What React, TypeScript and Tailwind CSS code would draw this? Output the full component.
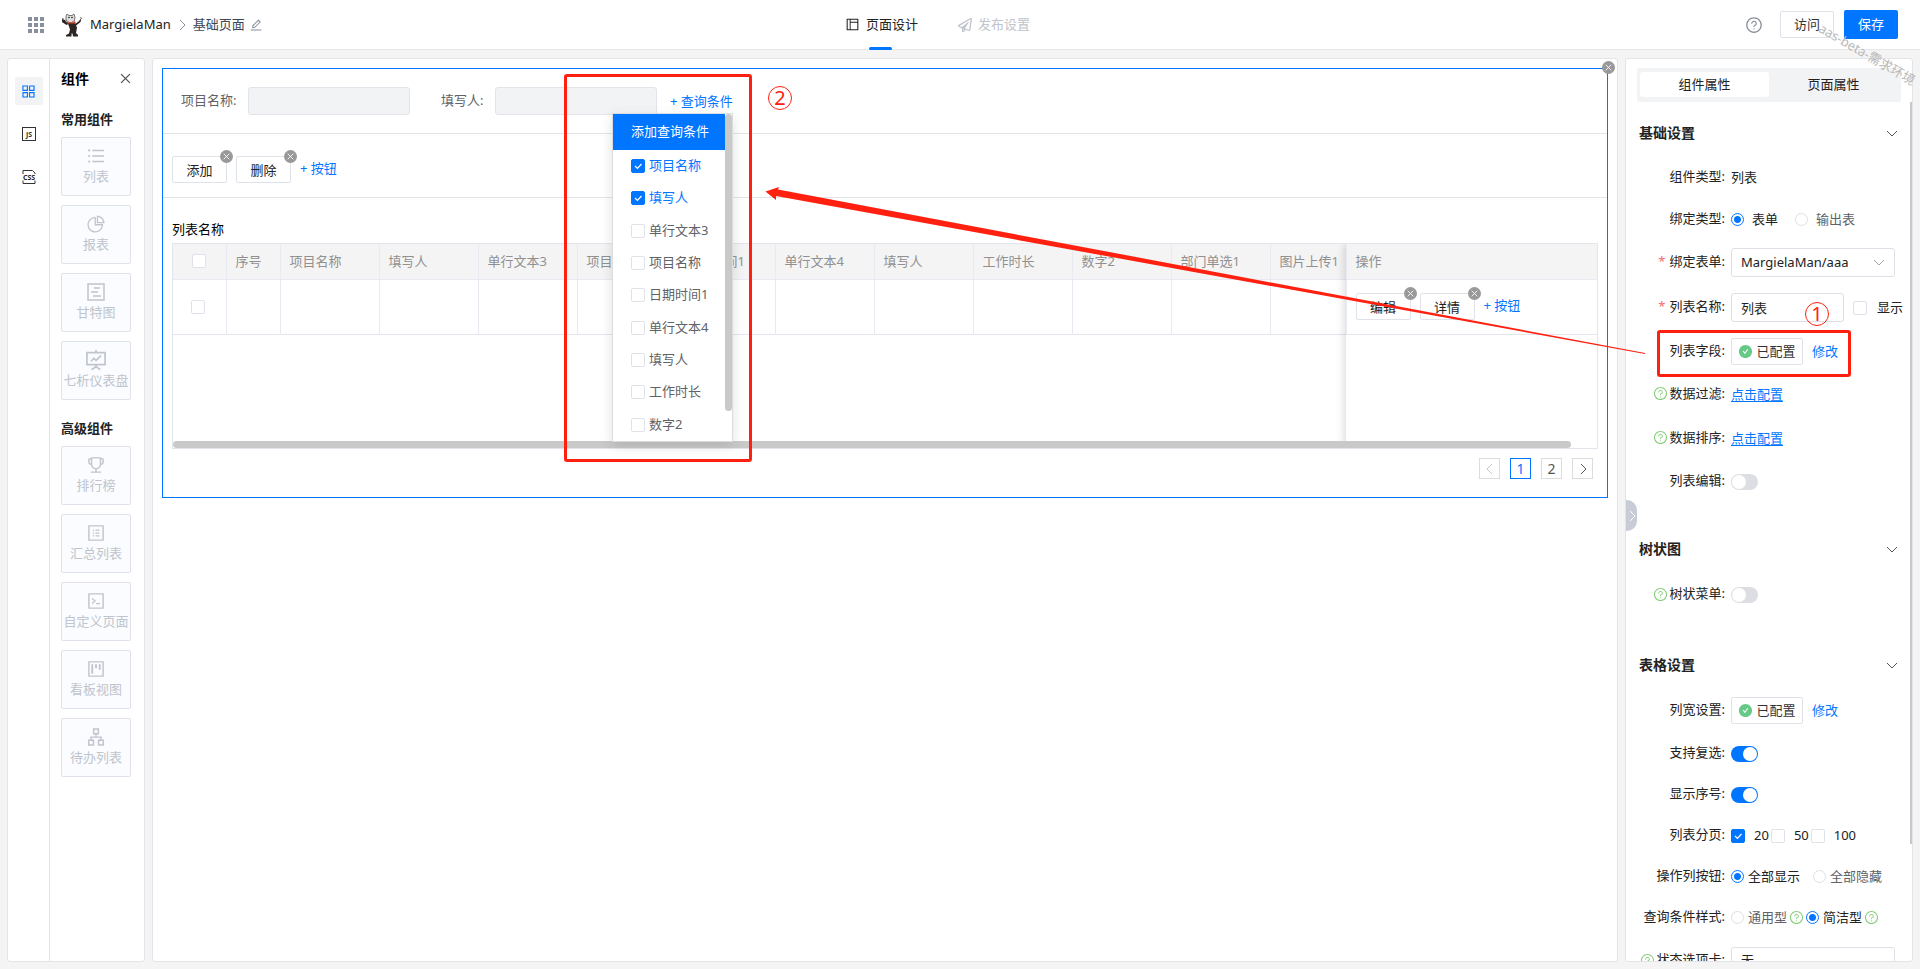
import type { ReactNode } from 'react';
import {
    AiFillCheckCircle,
    AiOutlineApartment,
    AiOutlineAppstore,
    AiOutlineCode,
    AiOutlineEdit,
    AiOutlineFundProjectionScreen,
    AiOutlineLayout,
    AiOutlinePieChart,
    AiOutlineProfile,
    AiOutlineProject,
    AiOutlineQuestionCircle,
    AiOutlineTrophy,
    AiOutlineUnorderedList,
} from 'react-icons/ai';
import { FaRegPaperPlane } from 'react-icons/fa';

type ChevronProps = { dir: 'down' | 'left' | 'right'; className?: string };

const chevronPoints = {
    down: '1,4 6,9 11,4',
    left: '8,1 3,6 8,11',
    right: '4,1 9,6 4,11',
};

function Chevron({ dir, className = '' }: ChevronProps) {
    return (
        <svg viewBox="0 0 12 12" className={`size-3 shrink-0 ${className}`} fill="none" stroke="currentColor">
            <polyline points={chevronPoints[dir]} />
        </svg>
    );
}

function Cross({ className = '' }: { className?: string }) {
    return (
        <svg viewBox="0 0 10 10" className={className} fill="none" stroke="currentColor" strokeWidth="1.2">
            <path d="M1 1l8 8M9 1l-8 8" />
        </svg>
    );
}

function GanttIcon({ className = '' }: { className?: string }) {
    return (
        <svg viewBox="0 0 18 18" className={className} fill="none" stroke="currentColor" strokeWidth="1.5">
            <rect x="1" y="1" width="16" height="16" />
            <path d="M7 5h6M4 9h7M6 13h8" />
        </svg>
    );
}

function Checkbox({ label, checked = false }: { label: string; checked?: boolean }) {
    return (
        <span className="relative inline-flex size-3.5 shrink-0">
            <input
                type="checkbox"
                aria-label={label}
                defaultChecked={checked}
                className="peer size-3.5 appearance-none rounded-[2px] border border-[#dfe2ea] bg-white checked:border-[#0075ff] checked:bg-[#0075ff]"
            />
            <svg
                viewBox="0 0 14 14"
                className="pointer-events-none absolute inset-0 hidden text-white peer-checked:block"
                fill="none"
                stroke="currentColor"
                strokeWidth="1.2"
            >
                <path d="M4 7l2.4 2.4L10.5 5" />
            </svg>
        </span>
    );
}

function Radio({ name, label, checked = false }: { name: string; label: string; checked?: boolean }) {
    return (
        <input
            type="radio"
            name={name}
            aria-label={label}
            defaultChecked={checked}
            className="size-[13px] shrink-0 appearance-none rounded-full border border-[#dcdfe6] bg-white checked:border-[#0075ff] checked:bg-[radial-gradient(#0075ff_3px,#fff_4px)]"
        />
    );
}

function Switch({ label, checked = false }: { label: string; checked?: boolean }) {
    return (
        <input
            type="checkbox"
            role="switch"
            aria-label={label}
            defaultChecked={checked}
            className="h-4 w-[27px] shrink-0 appearance-none rounded-full bg-[#dcdee3] p-px before:block before:size-3.5 before:rounded-full before:bg-white checked:bg-[#0075ff] checked:before:ml-[11px]"
        />
    );
}

function RemoveBadge({ label, className }: { label: string; className: string }) {
    return (
        <button
            aria-label={label}
            className={`absolute flex size-[13px] items-center justify-center rounded-full bg-[#999] text-white ${className}`}
        >
            <Cross className="size-[7px]" />
        </button>
    );
}

function ActionButton({ children }: { children: string }) {
    return (
        <div className="relative">
            <button className="h-[27px] w-[55px] rounded-[2px] border border-[#dfe2e8] bg-white pt-0.5 text-[#222]">
                {children}
            </button>
            <RemoveBadge label={`移除${children}`} className="-top-1.5 -right-1.5" />
        </div>
    );
}

function AddLink({ children }: { children: string }) {
    return <button className="pb-0.5 whitespace-nowrap text-[#0075ff]">+ {children}</button>;
}

const commonComponents = [
    { name: '列表', icon: AiOutlineUnorderedList, size: 'size-5' },
    { name: '报表', icon: AiOutlinePieChart, size: 'size-5' },
    { name: '甘特图', icon: GanttIcon, size: 'size-[18px]' },
    { name: '七析仪表盘', icon: AiOutlineFundProjectionScreen, size: 'size-6' },
];

const advancedComponents = [
    { name: '排行榜', icon: AiOutlineTrophy, size: 'size-5' },
    { name: '汇总列表', icon: AiOutlineProfile, size: 'size-5' },
    { name: '自定义页面', icon: AiOutlineCode, size: 'size-5' },
    { name: '看板视图', icon: AiOutlineProject, size: 'size-5' },
    { name: '待办列表', icon: AiOutlineApartment, size: 'size-5' },
];

function ComponentGroup({ title, items }: { title: string; items: typeof commonComponents }) {
    return (
        <section>
            <h3 className="h-[34px] pt-1.5 leading-5 font-bold text-[#222]">{title}</h3>
            <div className="flex flex-col gap-[9px]">
                {items.map(({ name, icon: Icon, size }) => (
                    <button
                        key={name}
                        className="flex h-[59px] flex-col items-center rounded-[2px] border border-[#dfe2ea] bg-[#fafcff] pt-1.5 text-[#c0c4cc]"
                    >
                        <span className="flex h-6 items-center">
                            <Icon className={size} />
                        </span>
                        <span className="leading-4 whitespace-nowrap">{name}</span>
                    </button>
                ))}
            </div>
        </section>
    );
}

function CatLogo() {
    return (
        <svg viewBox="0 0 22 24" className="h-6 w-[22px]">
            <path
                d="M5 3l1-2 2 1.5h3L13 1l1 3-.5 3.500-3 2H8L5 7z"
                fill="#ddd"
                stroke="#555"
                strokeWidth="0.8"
            />
            <circle cx="8" cy="4.500" r="0.8" fill="#222" />
            <circle cx="11" cy="4.500" r="0.8" fill="#222" />
            <path d="M5 8.500q5 2.500 9-.5l1 2.500q-5 2-9 .5z" fill="#d8402c" />
            <path d="M1 6l3 1 3 4-1.500 1L1 9zM20.500 5l-1 4-5 4-1-1.500 4-3z" fill="#2b2523" />
            <path d="M7 10.500h7l2 4-1 5.500 2 2v1.500h-5l-.5-3-1 0v3H5V22l3-1.500 1-4z" fill="#2b2523" />
            <path d="M1 5.500l2 .5M19 4.500l2 1" stroke="#777" />
        </svg>
    );
}

function TopBar() {
    return (
        <header className="grid h-[50px] shrink-0 grid-cols-[1fr_auto_1fr] border-b border-[#e6e6e6] bg-white">
            <div className="flex items-center pl-7">
                <button aria-label="应用" className="mr-[17px] grid grid-cols-3 gap-0.5">
                    {Array.from({ length: 9 }, (_, i) => (
                        <span key={i} className="size-1 bg-[#87909c]" />
                    ))}
                </button>
                <CatLogo />
                <a href="#app" className="ml-[7px] text-[#222]">
                    MargielaMan
                </a>
                <Chevron dir="right" className="mx-[5px] text-[#87909c]" />
                <a href="#page" className="text-[#404652]">
                    基础页面
                </a>
                <button aria-label="编辑名称" className="ml-1 text-[#87909c]">
                    <AiOutlineEdit className="size-3.5" />
                </button>
            </div>
            <nav className="flex pr-[45px]">
                <a href="#design" className="relative flex items-center gap-1.5 text-[#222]">
                    <AiOutlineLayout className="size-[15px]" />
                    页面设计
                    <span className="absolute -bottom-px left-6 h-[3px] w-[23px] rounded-full bg-[#0075ff]" />
                </a>
                <a href="#publish" className="ml-10 flex items-center gap-1.5 text-[#c0c4cc]">
                    <FaRegPaperPlane className="size-3.5" />
                    发布设置
                </a>
            </nav>
            <div className="flex items-center justify-end pr-[22px]">
                <button aria-label="帮助" className="text-[#87909c]">
                    <AiOutlineQuestionCircle className="size-[18px]" />
                </button>
                <button className="ml-[17px] h-[27px] w-[54px] rounded-[2px] border border-[#dfe2e8] text-[#333]">访问</button>
                <button className="ml-2.5 h-[29px] w-[54px] rounded-[2px] bg-[#0075ff] text-white">保存</button>
            </div>
        </header>
    );
}

function Sidebar() {
    return (
        <aside className="flex w-[138px] shrink-0 rounded-[3px] border border-[#e2e4e8] bg-white">
            <nav className="flex w-[41px] flex-col items-center gap-[15px] pt-[18px]">
                <button aria-label="组件" className="flex size-7 items-center justify-center rounded-[2px] bg-[#f2f3f5] text-[#0075ff]">
                    <AiOutlineAppstore className="size-[17px]" />
                </button>
                <button aria-label="JS" className="flex size-7 items-center justify-center">
                    <svg viewBox="0 0 14 14" className="size-3.5">
                        <rect x="0.5" y="0.5" width="13" height="13" fill="none" stroke="#333" />
                        <text x="7" y="9.500" textAnchor="middle" fontSize="7" fontWeight="700" fill="#333">
                            JS
                        </text>
                    </svg>
                </button>
                <button aria-label="CSS" className="flex size-7 items-center justify-center">
                    <svg viewBox="0 0 14 14" className="size-3.5 overflow-visible">
                        <path d="M1 4V.5h9.500l2.500 2.500v1M1 10.500v3h12v-3" fill="none" stroke="#333" />
                        <text x="7" y="9.500" textAnchor="middle" fontSize="7" fontWeight="700" fill="#222">
                            CSS
                        </text>
                    </svg>
                </button>
            </nav>
            <div className="flex-1 border-l border-[#e2e4e8] pr-[13px] pl-[11px]">
                <div className="mb-[5px] flex h-[39px] items-center justify-between">
                    <h2 className="text-sm font-bold text-black">组件</h2>
                    <button aria-label="关闭" className="text-[#555]">
                        <Cross className="size-[11px]" />
                    </button>
                </div>
                <ComponentGroup title="常用组件" items={commonComponents} />
                <div className="h-3" />
                <ComponentGroup title="高级组件" items={advancedComponents} />
            </div>
        </aside>
    );
}

const columns = [
    '项目名称',
    '填写人',
    '单行文本3',
    '项目名称',
    '日期时间1',
    '单行文本4',
    '填写人',
    '工作时长',
    '数字2',
    '部门单选1',
    '图片上传1',
];

const conditions = ['项目名称', '填写人', '单行文本3', '项目名称', '日期时间1', '单行文本4', '填写人', '工作时长', '数字2'];

function ConditionMenu() {
    return (
        <div className="absolute top-[26px] -left-[58px] z-10 flex h-[329px] w-[121px] border border-[#dcdcdc] bg-white shadow-[0_4px_12px_rgba(0,0,0,0.12)]">
            <div className="flex flex-1 flex-col">
                <div className="flex h-9 items-center bg-[#0075ff] pb-0.5 pl-[18px] text-white">添加查询条件</div>
                {conditions.map((name, i) => (
                    <label
                        key={i}
                        className={`flex flex-1 items-center gap-1 pl-[18px] ${i < 2 ? 'text-[#0075ff]' : 'text-[#606266]'}`}
                    >
                        <Checkbox label={name} checked={i < 2} />
                        <span className="pb-0.5">{name}</span>
                    </label>
                ))}
            </div>
            <div className="h-[297px] w-[7px] rounded-full bg-[#c9c9c9]" />
        </div>
    );
}

function DataTable() {
    return (
        <div className="relative h-[206px] overflow-hidden border border-[#e3e5ec]">
            <table className="w-full table-fixed border-collapse text-left text-[#909090]">
                <colgroup>
                    <col className="w-[53px]" />
                    <col className="w-[54px]" />
                    {columns.map((_, i) => (
                        <col key={i} className={i < 10 ? 'w-[99px]' : ''} />
                    ))}
                    <col className="w-[251px]" />
                </colgroup>
                <thead>
                    <tr className="h-[35px] border-b border-[#e8eaf2] bg-[#f4f4f4]">
                        <th className="border-r border-[#e8eaf2]">
                            <span className="flex justify-center">
                                <Checkbox label="全选" />
                            </span>
                        </th>
                        <th className="border-r border-[#e8eaf2] px-[9px] font-normal">序号</th>
                        {columns.map((name, i) => (
                            <th key={i} className="border-r border-[#e8eaf2] pl-[9px] font-normal whitespace-nowrap">
                                {name}
                            </th>
                        ))}
                        <th className="pl-[9px] font-normal">操作</th>
                    </tr>
                </thead>
                <tbody>
                    <tr className="h-[55px] border-b border-[#e3e5ec]">
                        <td className="border-r border-[#e8eaf2]">
                            <span className="flex pl-[18px]">
                                <Checkbox label="选择行" />
                            </span>
                        </td>
                        <td className="border-r border-[#e8eaf2]" />
                        {columns.map((_, i) => (
                            <td key={i} className="border-r border-[#e8eaf2]" />
                        ))}
                        <td className="pl-[9px]">
                            <div className="flex items-center gap-[9px]">
                                <ActionButton>编辑</ActionButton>
                                <ActionButton>详情</ActionButton>
                                <AddLink>按钮</AddLink>
                            </div>
                        </td>
                    </tr>
                </tbody>
            </table>
            {/* shadow of the pinned column */}
            <div className="pointer-events-none absolute inset-y-0 right-0 w-[251px] shadow-[-2px_0_8px_rgba(0,0,0,0.14)]" />
            <div className="absolute right-[26px] bottom-0 left-0 h-[7px] rounded-full bg-[#c9c9c9]" />
        </div>
    );
}

function Canvas() {
    const pageButton = 'flex size-[21px] items-center justify-center border text-sm';
    return (
        <main className="min-w-0 flex-1 rounded-[3px] border border-[#e2e4e8] bg-white p-[9px]">
            <div className="relative border border-[#0075ff]">
                <RemoveBadge label="移除列表" className="-top-2 -right-2" />
                <div className="flex h-[65px] items-center border-b border-[#e2e4e8] pl-[18px] text-[#606266]">
                    <label htmlFor="q-name" className="w-[67px]">
                        项目名称:
                    </label>
                    <input id="q-name" disabled className="h-7 w-[162px] rounded-[3px] border border-[#e2e4ea] bg-[#f2f3f5]" />
                    <label htmlFor="q-user" className="ml-[31px] w-[54px]">
                        填写人:
                    </label>
                    <input id="q-user" disabled className="h-7 w-[162px] rounded-[3px] border border-[#e2e4ea] bg-[#f2f3f5]" />
                    <div className="relative ml-[13px] h-7 leading-7">
                        <AddLink>查询条件</AddLink>
                        <ConditionMenu />
                    </div>
                </div>
                <div className="flex h-16 items-center gap-[9px] border-b border-[#e2e4e8] pt-2 pl-[9px]">
                    <ActionButton>添加</ActionButton>
                    <ActionButton>删除</ActionButton>
                    <AddLink>按钮</AddLink>
                </div>
                <div className="px-[9px]">
                    <h2 className="flex h-[45px] items-end pb-1 leading-5 text-black">列表名称</h2>
                    <DataTable />
                    <div className="flex justify-end gap-2.5 pt-[9px] pr-[5px] pb-[18px]">
                        <button aria-label="上一页" className={`${pageButton} border-[#dcdcdc] text-[#c0c4cc]`}>
                            <Chevron dir="left" />
                        </button>
                        <button className={`${pageButton} border-[#0075ff] text-[#0075ff]`}>1</button>
                        <button className={`${pageButton} border-[#dcdcdc] text-[#555]`}>2</button>
                        <button aria-label="下一页" className={`${pageButton} border-[#dcdcdc] text-[#555]`}>
                            <Chevron dir="right" />
                        </button>
                    </div>
                </div>
            </div>
        </main>
    );
}

function HelpMark() {
    return <AiOutlineQuestionCircle className="size-[15px] shrink-0 text-[#85ce79]" />;
}

type RowProps = { label: string; height: string; help?: boolean; required?: boolean; children: ReactNode };

function Row({ label, height, help, required, children }: RowProps) {
    return (
        <div className={`flex items-center whitespace-nowrap ${height}`}>
            <div className="mr-1.5 flex w-[99px] shrink-0 items-center justify-end gap-0.5 pb-0.5">
                {help && <HelpMark />}
                {required && <span className="mr-0.5 text-[#f56c6c]">*</span>}
                {label}:
            </div>
            {children}
        </div>
    );
}

function Section({ title, children }: { title: string; children: ReactNode }) {
    return (
        <section className="mb-6">
            <div className="flex h-[46px] items-center justify-between pr-[14px] pl-[13px]">
                <h3 className="text-sm font-bold">{title}</h3>
                <button aria-label={`收起${title}`} className="text-[#555]">
                    <Chevron dir="down" />
                </button>
            </div>
            {children}
        </section>
    );
}

function Configured() {
    return (
        <>
            <button className="flex h-[27px] w-[72px] items-center justify-center gap-[3px] rounded-[2px] border border-[#dfe2e8] text-[#333]">
                <AiFillCheckCircle className="size-[15px] text-[#67c988]" />
                已配置
            </button>
            <a href="#edit" className="ml-[9px] text-[#0075ff]">
                修改
            </a>
        </>
    );
}

function Properties() {
    return (
        <aside className="relative w-[288px] shrink-0 overflow-hidden rounded-[3px] border border-[#e2e4e8] bg-white text-[#222]">
            <div className="mx-[11px] mt-[9px] mb-2 flex h-[34px] rounded-[3px] bg-[#f2f3f5] px-[3px] pt-1 pb-[5px]">
                <button className="flex-1 rounded-[3px] bg-white">组件属性</button>
                <button className="flex-1">页面属性</button>
            </div>
            <Section title="基础设置">
                <Row label="组件类型" height="h-[43px]">
                    列表
                </Row>
                <Row label="绑定类型" height="h-[41px]">
                    <label className="flex items-center gap-2">
                        <Radio name="bind" label="表单" checked />
                        表单
                    </label>
                    <label className="ml-[17px] flex items-center gap-2 text-[#606266]">
                        <Radio name="bind" label="输出表" />
                        输出表
                    </label>
                </Row>
                <Row label="绑定表单" height="h-[45px]" required>
                    <div className="relative">
                        <select
                            aria-label="绑定表单"
                            className="h-[29px] w-[164px] appearance-none rounded-[3px] border border-[#dcdfe6] bg-white pl-[9px]"
                        >
                            <option>MargielaMan/aaa</option>
                        </select>
                        <Chevron dir="down" className="pointer-events-none absolute top-2 right-2.5 text-[#a0a4ac]" />
                    </div>
                </Row>
                <Row label="列表名称" height="h-[45px]" required>
                    <input
                        aria-label="列表名称"
                        defaultValue="列表"
                        className="h-[29px] w-[113px] rounded-[3px] border border-[#dcdfe6] px-[9px]"
                    />
                    <label className="ml-[9px] flex items-center gap-2.5">
                        <Checkbox label="显示" />
                        显示
                    </label>
                </Row>
                <Row label="列表字段" height="h-[43px]">
                    <Configured />
                </Row>
                <Row label="数据过滤" height="h-[43px]" help>
                    <a href="#filter" className="text-[#0075ff] underline underline-offset-2">
                        点击配置
                    </a>
                </Row>
                <Row label="数据排序" height="h-[45px]" help>
                    <a href="#sort" className="text-[#0075ff] underline underline-offset-2">
                        点击配置
                    </a>
                </Row>
                <Row label="列表编辑" height="h-[41px]">
                    <Switch label="列表编辑" />
                </Row>
            </Section>
            <Section title="树状图">
                <Row label="树状菜单" height="h-[46px]" help>
                    <Switch label="树状菜单" />
                </Row>
            </Section>
            <Section title="表格设置">
                <Row label="列宽设置" height="h-[45px]">
                    <Configured />
                </Row>
                <Row label="支持复选" height="h-[41px]">
                    <Switch label="支持复选" checked />
                </Row>
                <Row label="显示序号" height="h-[41px]">
                    <Switch label="显示序号" checked />
                </Row>
                <Row label="列表分页" height="h-[41px]">
                    {['20', '50', '100'].map((size, i) => (
                        <label key={size} className="mr-0.5 flex items-center gap-[9px]">
                            <Checkbox label={size} checked={i === 0} />
                            {size}
                        </label>
                    ))}
                </Row>
                <Row label="操作列按钮" height="h-[41px]">
                    <label className="flex items-center gap-1">
                        <Radio name="ops" label="全部显示" checked />
                        全部显示
                    </label>
                    <label className="ml-[13px] flex items-center gap-1 text-[#606266]">
                        <Radio name="ops" label="全部隐藏" />
                        全部隐藏
                    </label>
                </Row>
                <Row label="查询条件样式" height="h-[41px]">
                    <label className="mr-0.5 flex items-center gap-1 text-[#606266]">
                        <Radio name="style" label="通用型" />
                        通用型
                    </label>
                    <HelpMark />
                    <label className="mr-0.5 ml-0.5 flex items-center gap-1">
                        <Radio name="style" label="简洁型" checked />
                        简洁型
                    </label>
                    <HelpMark />
                </Row>
                <Row label="状态选项卡" height="h-[46px]" help>
                    <select
                        aria-label="状态选项卡"
                        className="h-[29px] w-[164px] appearance-none rounded-[3px] border border-[#dcdfe6] bg-white pl-[9px]"
                    >
                        <option>无</option>
                    </select>
                </Row>
            </Section>
            <div className="absolute top-[43px] right-0 h-[742px] w-0.5 bg-[#c6c8cc]" />
            <button
                aria-label="收起面板"
                className="absolute top-[441px] left-0 flex h-[31px] w-[11px] items-center justify-center rounded-r-[10px] bg-[#c8ccd4] text-white"
            >
                <Chevron dir="right" />
            </button>
        </aside>
    );
}

function Annotations() {
    const step = 'absolute flex size-6 items-center justify-center rounded-full border border-[#ff2010] text-xl leading-none text-[#ff2010]';
    const frame = 'absolute rounded-[3px] border-[3px] border-[#ff2010]';
    return (
        <div className="pointer-events-none absolute inset-0 z-20 overflow-hidden">
            <div className={`${frame} top-[74px] left-[564px] h-[388px] w-[188px]`} />
            <div className={`${frame} top-[330px] left-[1657px] h-[47px] w-[194px]`} />
            <span className={`${step} top-[86px] left-[768px]`}>2</span>
            <span className={`${step} top-[302px] left-[1805px]`}>1</span>
            <svg className="absolute top-0 left-0 h-[400px] w-[1700px]" fill="#ff2010">
                <polygon points="765.5,191.500 779,187 778,189.500 1645,353 1645,354 776,196 776,200" />
            </svg>
            <span className="absolute top-[44px] left-[1813px] rotate-30 leading-5 whitespace-nowrap text-[#b8b8b8]">
                aas-beta-需求环境
            </span>
        </div>
    );
}

export default function App() {
    return (
        <div className="relative flex h-screen flex-col overflow-hidden bg-[#f4f4f4] font-['Noto_Sans','Noto_Sans_CJK_SC',sans-serif] text-[13px]">
            <TopBar />
            <div className="flex min-h-0 flex-1 gap-[7px] px-[7px] pt-2 pb-[7px]">
                <Sidebar />
                <Canvas />
                <Properties />
            </div>
            <Annotations />
        </div>
    );
}
